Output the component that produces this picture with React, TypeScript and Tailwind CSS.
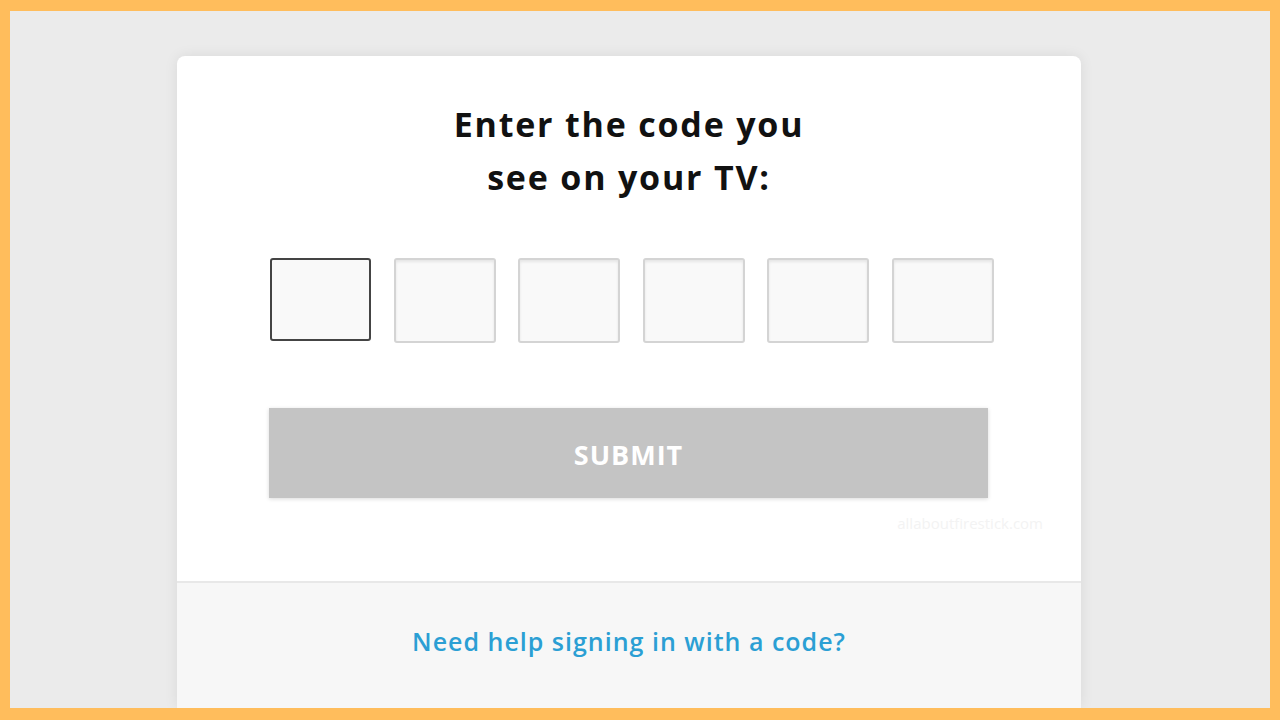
export default function App() {
  const boxes = [0, 1, 2, 3, 4, 5];

  return (
    <div className="h-[720px] w-[1280px] overflow-hidden bg-[#ffbd5c] pt-[11px] pr-[10px] pb-[12px] pl-[10px]">
      <div className="flex h-full w-full overflow-hidden bg-[#ebebeb] font-['Open_Sans',sans-serif]">
        <div className="mt-[45px] ml-[167px] flex w-[904px] shrink-0 flex-col rounded-t-[8px] bg-white shadow-[0_0_14px_rgba(0,0,0,0.08)]">
          <h1 className="pt-[42px] text-center text-[34px] leading-[53px] font-bold tracking-[1.8px] text-[#111]">
            Enter the code you
            <br />
            see on your TV:
          </h1>

          <div className="mt-[54px] flex gap-[22.5px] pl-[93px]">
            {boxes.map((i) => (
              <div
                key={i}
                className={
                  i === 0
                    ? "h-[83px] w-[101px] rounded-[3px] border-2 border-[#444] bg-[#f9f9f9]"
                    : "h-[85px] w-[102px] rounded-[3px] border-2 border-[#d4d4d4] bg-[#f9f9f9] shadow-[inset_0_2px_3px_rgba(0,0,0,0.08)]"
                }
              />
            ))}
          </div>

          <div className="mt-[65px] flex pl-[92px]">
            <button className="h-[90px] w-[719px] bg-[#c4c4c4] pt-[5px] text-[27px] font-bold tracking-[1px] text-white shadow-[0_1px_4px_rgba(0,0,0,0.15)]">
              SUBMIT
            </button>
          </div>

          <div className="flex h-[83px] justify-end pr-[38px] pt-[14px] text-[15px] text-[#f3f3f3]">
            allaboutfirestick.com
          </div>

          <div className="flex flex-1 justify-center border-t-2 border-[#e8e8e8] bg-[#f7f7f7] pt-[40px]">
            <a className="text-[25px] font-semibold tracking-[1px] text-[#2b9fd4]">Need help signing in with a code?</a>
          </div>
        </div>
      </div>
    </div>
  );
}
